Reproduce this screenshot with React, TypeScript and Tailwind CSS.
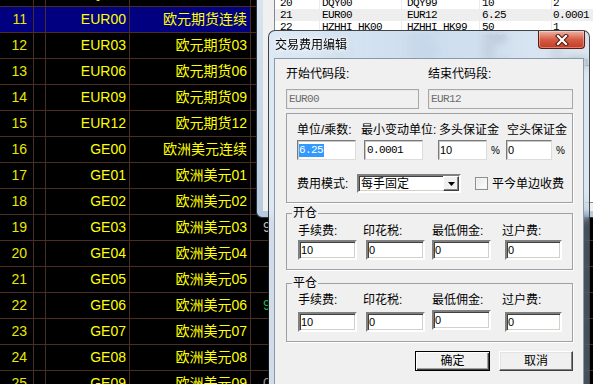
import React from 'react'

// 字体: 中文走 Noto CJK, ASCII 走 Liberation
const CJK = "font-['Liberation_Sans','Noto_Sans_CJK_SC',sans-serif]"
const MONO = "font-['Liberation_Mono','Noto_Sans_CJK_SC',monospace] text-[11px] tracking-[-0.6px]"

// 左侧行情表 (第10行只露出底边)
const ROWS = [
  { no: '10', code: 'DQY99', name: '大豆期货99' },
  { no: '11', code: 'EUR00', name: '欧元期货连续' },
  { no: '12', code: 'EUR03', name: '欧元期货03' },
  { no: '13', code: 'EUR06', name: '欧元期货06' },
  { no: '14', code: 'EUR09', name: '欧元期货09' },
  { no: '15', code: 'EUR12', name: '欧元期货12' },
  { no: '16', code: 'GE00', name: '欧洲美元连续' },
  { no: '17', code: 'GE01', name: '欧洲美元01' },
  { no: '18', code: 'GE02', name: '欧洲美元02' },
  { no: '19', code: 'GE03', name: '欧洲美元03' },
  { no: '20', code: 'GE04', name: '欧洲美元04' },
  { no: '21', code: 'GE05', name: '欧洲美元05' },
  { no: '22', code: 'GE06', name: '欧洲美元06' },
  { no: '23', code: 'GE07', name: '欧洲美元07' },
  { no: '24', code: 'GE08', name: '欧洲美元08' },
  { no: '25', code: 'GE09', name: '欧洲美元09' },
]

// 第5列被弹窗挡住, 只露出第一个字
const EXTRA: Record<string, { t: string; c: string }> = {
  '19': { t: '9', c: 'text-[#b8b8b8]' },
  '22': { t: '9', c: 'text-[#22b04a]' },
  '25': { t: '0', c: 'text-[#9a9a9a]' },
}

// 后面那个费用列表窗口
const LIST = [
  ['20', 'DQY00', 'DQY99', '10', '2'],
  ['21', 'EUR00', 'EUR12', '6.25', '0.0001'],
  ['22', 'HZHHI_HK00', 'HZHHI_HK99', '50', '1'],
  ['23', 'GE00', 'GE99', '2500', '0.005'],
  ['24', 'HSI00', 'HSI99', '50', '1'],
  ['25', 'JY00', 'JY99', '12.5', '0.0001'],
]

const sunken =
  'border-2 border-t-[#808080] border-l-[#808080] border-b-white border-r-white bg-white shadow-[inset_1px_1px_0_#404040,inset_-1px_-1px_0_#d4d0c8]'
const thin =
  'border border-t-[#7a7a7a] border-l-[#7a7a7a] border-b-[#dcdcdc] border-r-[#dcdcdc] bg-white shadow-[inset_1px_1px_0_#c8c8c8]'

function Quote() {
  return (
    <div className={`${CJK} -mt-[19px] flex flex-col text-[14px] text-[#ffff00]`}>
      {ROWS.map((r) => {
        const hl = r.no === '11' ? 'bg-[#000080]' : ''
        const ex = EXTRA[r.no]
        return (
          <div key={r.no} className="flex h-[26px] shrink-0 border-b border-[#4a2e24]">
            <div className={`flex w-[34px] items-center justify-end border-r border-[#4a2e24] pr-[6px] text-[#e8e800] ${hl}`}>
              {r.no}
            </div>
            <div className={`w-[12px] border-r border-[#4a2e24] ${hl}`} />
            <div className={`flex w-[84px] items-center justify-end border-r border-[#4a2e24] pr-[3px] ${hl}`}>
              {r.code}
            </div>
            <div className={`flex w-[121px] items-center justify-end border-r border-[#4a2e24] pr-[3px] ${hl}`}>
              {r.name}
            </div>
            <div className={`flex flex-1 items-center pl-[12px] ${ex ? ex.c : ''}`}>{ex ? ex.t : ''}</div>
          </div>
        )
      })}
    </div>
  )
}

function BackWindow() {
  return (
    <div className="absolute left-[256px] top-[-3px] flex h-[221px] w-[360px] rounded-bl-[6px] border-b border-l border-[#2b3440] bg-linear-to-b from-[#d9e4ef] to-[#b7cbde] pb-[6px] pl-[6px]">
      <div className="flex flex-1 bg-[#f0f0f0] pb-[8px] pl-[11px]">
        <div className={`${MONO} flex-1 border-b border-l border-[#828790] bg-white text-black`}>
          {LIST.map((r) => (
            <div key={r[0]} className={`flex h-[12px] leading-[12px] ${r[0] === '21' ? 'bg-[#eeeeee]' : ''}`}>
              <div className="w-[45px] border-r border-[#ececec] pl-[5px]">{r[0]}</div>
              <div className="w-[82px] border-r border-[#ececec] pl-[2px]">{r[1]}</div>
              <div className="w-[78px] border-r border-[#ececec] pl-[5px]">{r[2]}</div>
              <div className="w-[72px] border-r border-[#ececec] pl-[2px]">{r[3]}</div>
              <div className="flex-1 pl-[1px]">{r[4]}</div>
            </div>
          ))}
        </div>
      </div>
    </div>
  )
}

function Field({ w, children, className = '' }: { w: string; children?: React.ReactNode; className?: string }) {
  return <div className={`flex h-[20px] items-center pl-[1px] ${w} ${className}`}>{children}</div>
}

function FeeGroup({ title, lift }: { title: string; lift?: boolean }) {
  return (
    <fieldset className="border border-[#a0a0a0] px-[5px] pb-[9px] shadow-[1px_1px_0_#fff]">
      <legend className="px-[1px] leading-[12px]">{title}</legend>
      <div className={`pl-[6px] ${title === '开仓' ? 'mt-[5px]' : 'mt-[4px]'}`}>
        <div className="flex leading-[14px]">
          <span className="w-[65px]">手续费:</span>
          <span className="w-[69px]">印花税:</span>
          <span className="w-[70px]">最低佣金:</span>
          <span>过户费:</span>
        </div>
        <div className={`flex items-start font-['Liberation_Sans',sans-serif] text-[11px] ${title === '开仓' ? 'mt-[2px]' : 'mt-[5px]'}`}>
          <Field w="w-[59px]" className={sunken}>10</Field>
          <Field w="w-[59px]" className={`ml-[9px] ${sunken}`}>0</Field>
          <Field w="w-[59px]" className={`ml-[7px] ${sunken} ${lift ? '-mt-[2px]' : ''}`}>0</Field>
          <Field w="w-[57px]" className={`ml-[14px] ${sunken}`}>0</Field>
        </div>
      </div>
    </fieldset>
  )
}

function Dialog() {
  return (
    <div className="absolute left-[268px] top-[30px] flex h-[360px] w-[322px] flex-col rounded-t-[7px] border border-black/70 bg-linear-to-r from-[#dce8f4]/95 via-[#c6d9ed]/90 to-[#a9c3de]/40 backdrop-blur-[5px]">
      {/* 标题栏 */}
      <div className="relative flex h-[27px] shrink-0 items-center pl-[6px]">
        <span className={`${CJK} text-[12px] text-black [text-shadow:0_0_6px_#fff,0_0_3px_#fff]`}>交易费用编辑</span>
        <div className="absolute right-[4px] top-0 flex h-[18px] w-[47px] items-center justify-center rounded-b-[4px] border border-t-0 border-[#5c1a10] bg-linear-to-b from-[#ecb4a7] via-[#d65c44] to-[#c43b22] shadow-[inset_0_0_0_1px_rgba(255,255,255,0.35)]">
          <svg width="14" height="12" viewBox="0 0 14 12">
            <path d="M3 2 L11 10 M11 2 L3 10" stroke="#4a1a12" strokeWidth="4.2" strokeLinecap="square" />
            <path d="M3 2 L11 10 M11 2 L3 10" stroke="#ffffff" strokeWidth="2.2" strokeLinecap="square" />
          </svg>
        </div>
      </div>

      {/* 客户区 */}
      <div className={`${CJK} mx-[5px] flex flex-1 flex-col border border-[#8a99aa] bg-[#f0f0f0] pl-[11px] pr-[10px] text-[12px] text-black`}>
        <div className="mt-[8px] flex leading-[14px]">
          <span className="w-[142px]">开始代码段:</span>
          <span>结束代码段:</span>
        </div>
        <div className={`${MONO} mt-[8px] flex text-[#6d6d6d]`}>
          <div className="flex h-[20px] w-[133px] items-center border border-[#a8a8a8] bg-[#f0f0f0] pl-[2px] shadow-[inset_1px_1px_0_#e6e6e6]">EUR00</div>
          <div className="ml-[9px] flex h-[20px] flex-1 items-center border border-[#a8a8a8] bg-[#f0f0f0] pl-[2px] shadow-[inset_1px_1px_0_#e6e6e6]">EUR12</div>
        </div>

        {/* 合约参数 */}
        <div className="mt-[4px] border border-[#a0a0a0] pb-[9px] pl-[10px] pt-[9px] shadow-[1px_1px_0_#fff]">
          <div className="flex leading-[14px]">
            <span className="w-[64px]">单位/乘数:</span>
            <span className="w-[78px]">最小变动单位:</span>
            <span className="w-[68px]">多头保证金</span>
            <span>空头保证金</span>
          </div>
          <div className="mt-[3px] flex items-center">
            <Field w="w-[59px]" className={`${thin} ${MONO}`}>
              <span className="bg-[#3399ff] pr-[1px] leading-[13px] text-white">6.25</span>
            </Field>
            <Field w="w-[59px]" className={`ml-[8px] pl-[2px] ${thin} ${MONO}`}>0.0001</Field>
            <Field w="w-[49px]" className={`ml-[15px] font-['Liberation_Sans',sans-serif] text-[11px] ${thin}`}>10</Field>
            <span className="ml-[4px] w-[15px] text-[10px]">%</span>
            <Field w="w-[46px]" className={`font-['Liberation_Sans',sans-serif] text-[11px] ${thin}`}>0</Field>
            <span className="ml-[4px] text-[10px]">%</span>
          </div>
          <div className="mt-[14px] flex h-[19px] items-center">
            <span className="w-[60px] leading-[14px]">费用模式:</span>
            <div className={`flex h-[19px] w-[104px] items-center justify-between pl-[2px] ${sunken}`}>
              <span className="leading-[14px]">每手固定</span>
              <div className="flex h-[15px] w-[16px] items-center justify-center border border-b-[#404040] border-l-white border-r-[#404040] border-t-white bg-[#f0f0f0] shadow-[inset_-1px_-1px_0_#808080]">
                <svg width="7" height="4" viewBox="0 0 7 4">
                  <path d="M0 0 H7 L3.5 4 Z" fill="#000" />
                </svg>
              </div>
            </div>
            <div className="ml-[14px] h-[13px] w-[13px] border border-[#8e8f8f] bg-linear-to-br from-[#e6e6e6] to-white shadow-[inset_0_0_0_1px_#f4f4f4]" />
            <span className="ml-[4px] leading-[14px]">平今单边收费</span>
          </div>
        </div>

        <div className="mt-[4px]">
          <FeeGroup title="开仓" />
        </div>
        <div className="mt-[7px]">
          <FeeGroup title="平仓" lift />
        </div>

        <div className="mt-[9px] flex justify-end gap-[9px]">
          <button
            type="button"
            className="h-[20px] w-[75px] border border-black bg-[#f0f0f0] leading-[14px] shadow-[inset_1px_1px_0_#fff,inset_-1px_-1px_0_#404040,inset_-2px_-2px_0_#a0a0a0]"
          >
            确定
          </button>
          <button
            type="button"
            className="h-[20px] w-[74px] border border-b-[#404040] border-l-white border-r-[#404040] border-t-white bg-[#f0f0f0] leading-[14px] shadow-[inset_-1px_-1px_0_#808080,inset_1px_1px_0_#e3e3e3]"
          >
            取消
          </button>
        </div>
      </div>
    </div>
  )
}

export default function App() {
  return (
    <div className="relative h-[384px] w-[593px] overflow-hidden bg-black">
      <Quote />
      <BackWindow />
      <Dialog />
    </div>
  )
}
